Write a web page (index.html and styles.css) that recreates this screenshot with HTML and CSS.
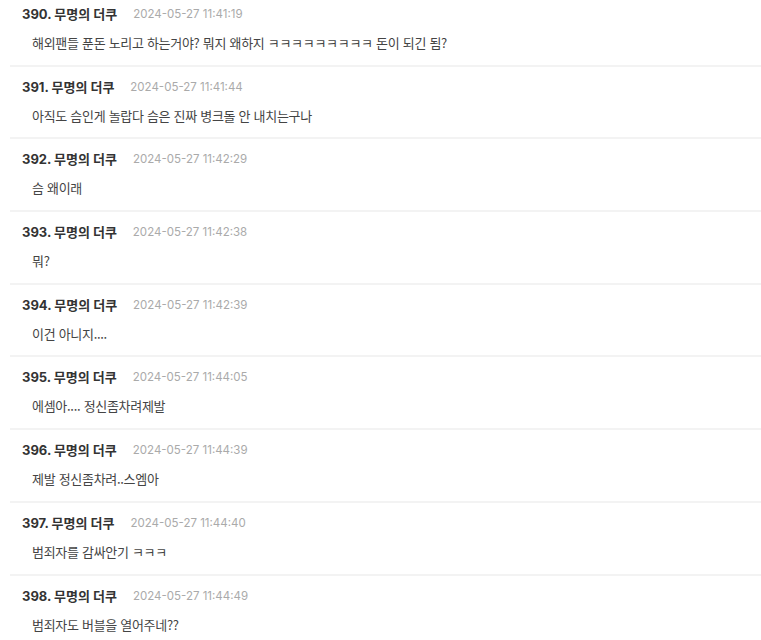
FILE: index.html
```html
<!DOCTYPE html>
<html lang="ko">
<head>
  <meta charset="UTF-8">
  <meta name="viewport" content="width=device-width, initial-scale=1.0">
  <title>댓글</title>
  <link rel="stylesheet" href="styles.css">
</head>
<body>
  <!-- Comment list -->
  <ul class="comments">
    <li class="comment">
      <div class="comment-head"><span class="comment-author">390. 무명의 더쿠</span><span class="comment-date">2024-05-27 11:41:19</span></div>
      <p class="comment-body">해외팬들 푼돈 노리고 하는거야? 뭐지 왜하지 ㅋㅋㅋㅋㅋㅋㅋㅋㅋ 돈이 되긴 됨?</p>
    </li>
    <li class="comment">
      <div class="comment-head"><span class="comment-author">391. 무명의 더쿠</span><span class="comment-date">2024-05-27 11:41:44</span></div>
      <p class="comment-body">아직도 슴인게 놀랍다 슴은 진짜 병크돌 안 내치는구나</p>
    </li>
    <li class="comment">
      <div class="comment-head"><span class="comment-author">392. 무명의 더쿠</span><span class="comment-date">2024-05-27 11:42:29</span></div>
      <p class="comment-body">슴 왜이래</p>
    </li>
    <li class="comment">
      <div class="comment-head"><span class="comment-author">393. 무명의 더쿠</span><span class="comment-date">2024-05-27 11:42:38</span></div>
      <p class="comment-body">뭐?</p>
    </li>
    <li class="comment">
      <div class="comment-head"><span class="comment-author">394. 무명의 더쿠</span><span class="comment-date">2024-05-27 11:42:39</span></div>
      <p class="comment-body">이건 아니지....</p>
    </li>
    <li class="comment">
      <div class="comment-head"><span class="comment-author">395. 무명의 더쿠</span><span class="comment-date">2024-05-27 11:44:05</span></div>
      <p class="comment-body">에셈아.... 정신좀차려제발</p>
    </li>
    <li class="comment">
      <div class="comment-head"><span class="comment-author">396. 무명의 더쿠</span><span class="comment-date">2024-05-27 11:44:39</span></div>
      <p class="comment-body">제발 정신좀차려..스엠아</p>
    </li>
    <li class="comment">
      <div class="comment-head"><span class="comment-author">397. 무명의 더쿠</span><span class="comment-date">2024-05-27 11:44:40</span></div>
      <p class="comment-body">범죄자를 감싸안기 ㅋㅋㅋ</p>
    </li>
    <li class="comment">
      <div class="comment-head"><span class="comment-author">398. 무명의 더쿠</span><span class="comment-date">2024-05-27 11:44:49</span></div>
      <p class="comment-body">범죄자도 버블을 열어주네??</p>
    </li>
  </ul>
</body>
</html>
```

FILE: styles.css
```css
/* General styles */
body {
  margin: 0;
  font-family: "Noto Sans CJK KR", "Noto Sans", sans-serif;
  background-color: #fff;
  color: #333;
  overflow: hidden;
}

/* Comment list */
.comments {
  list-style: none;
  margin: -6px 0 0 10px;
  padding: 0;
}

.comment {
  padding: 10px 0 11.7px;
  border-bottom: 2px solid #f3f3f3;
}

.comment-head {
  display: flex;
  align-items: center;
  gap: 16px;
  height: 20px;
  padding-left: 12px;
}

.comment-author {
  font-family: Inter, "Noto Sans CJK KR", sans-serif;
  font-size: 13px;
  font-weight: bold;
  line-height: 20px;
  color: #333;
}

.comment-date {
  font-family: Inter, "Noto Sans CJK KR", sans-serif;
  font-size: 11.5px;
  line-height: 20px;
  color: #aaa;
}

.comment-body {
  margin: 9px 0 0;
  padding-left: 22px;
  font-size: 13px;
  line-height: 20px;
  letter-spacing: -0.3px;
  color: #444;
}
```
